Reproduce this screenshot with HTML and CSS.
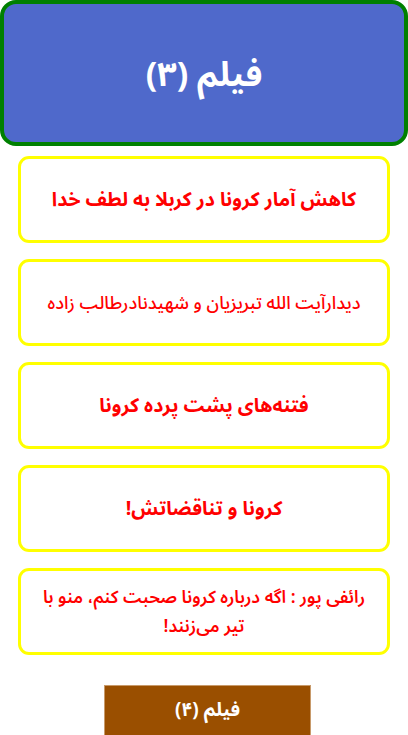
FILE: index.html
```html
<!DOCTYPE html>
<html lang="fa" dir="rtl">
<head>
<meta charset="utf-8">
<title>فیلم (۳)</title>
<link rel="stylesheet" href="styles.css">
</head>
<body>
<div class="page">
  <header class="hero"><h1 class="hero-title">فیلم (۳)</h1></header>
  <ul class="list">
    <li class="card"><a class="card-link big" href="#">کاهش آمار کرونا در کربلا به لطف خدا</a></li>
    <li class="card"><a class="card-link small" href="#">دیدارآیت الله تبریزیان و شهیدنادرطالب زاده</a></li>
    <li class="card"><a class="card-link big" href="#">فتنه‌های پشت پرده کرونا</a></li>
    <li class="card"><a class="card-link big" href="#">کرونا و تناقضاتش!</a></li>
    <li class="card"><a class="card-link medium" href="#">رائفی پور : اگه درباره کرونا صحبت کنم، منو با تیر می‌زنند!</a></li>
  </ul>
  <div class="next-wrap"><a class="next" href="#">فیلم (۴)</a></div>
</div>
</body>
</html>
```
FILE: styles.css
```css
html, body {
  margin: 0;
  padding: 0;
  background: #ffffff;
}
body {
  font-family: "Noto Sans Arabic", "DejaVu Sans", sans-serif;
  width: 408px;
  height: 735px;
  overflow: hidden;
}
.page {
  display: flex;
  flex-direction: column;
}
.hero {
  box-sizing: border-box;
  height: 146px;
  background: #4f69cb;
  border: 4px solid #008000;
  border-radius: 16px;
  display: flex;
  align-items: center;
  justify-content: center;
}
.hero-title {
  margin: 0;
  color: #ffffff;
  font-size: 34px;
  font-weight: bold;
  padding-top: 4px;
}
.list {
  list-style: none;
  margin: 10px 18px 0 18px;
  padding: 0;
  display: flex;
  flex-direction: column;
  gap: 16px;
}
.card {
  box-sizing: border-box;
  height: 87px;
  border: 3px solid #ffff00;
  border-radius: 11px;
  display: flex;
  align-items: center;
  justify-content: center;
  text-align: center;
  padding: 0 20px;
}
.card-link {
  color: #ff0000;
  text-decoration: none;
  font-weight: bold;
}
.card-link.big { font-size: 19.5px; }
.card-link.small { font-size: 18px; font-weight: 500; letter-spacing: 0.3px; }
.card-link.medium { font-size: 17.5px; line-height: 29px; font-weight: 600; }
.next-wrap {
  margin-top: 30px;
  padding-right: 97px;
  display: flex;
  justify-content: flex-start;
}
.next {
  box-sizing: border-box;
  width: 207px;
  height: 50px;
  background: #9a4f00;
  border: 1px solid #c89a6a;
  border-bottom: 0;
  color: #ffffff;
  font-weight: bold;
  font-size: 19px;
  line-height: 28px;
  text-decoration: none;
  display: flex;
  justify-content: center;
  padding-top: 10px;
}
```
